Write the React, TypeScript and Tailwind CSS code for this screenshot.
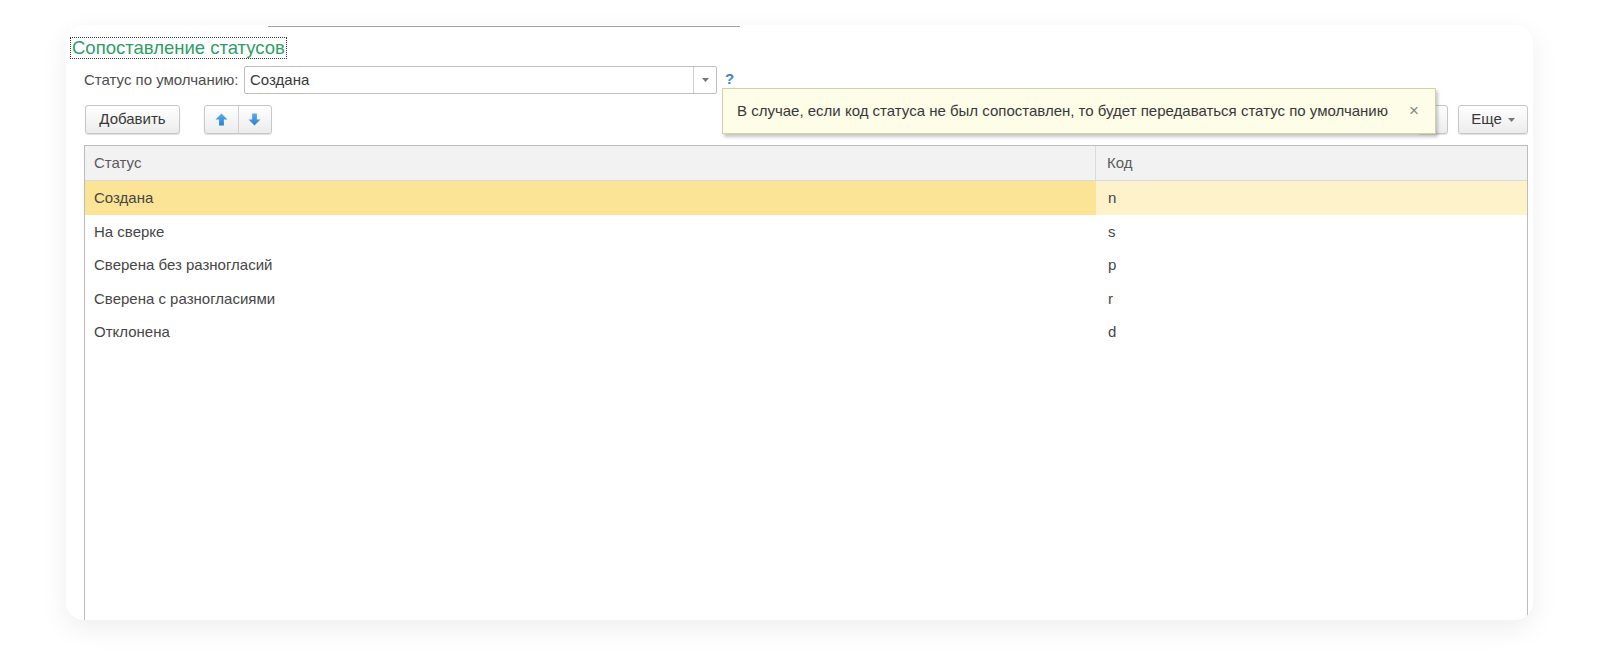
import React from "react";

const rows = [
  { status: "Создана", code: "n" },
  { status: "На сверке", code: "s" },
  { status: "Сверена без разногласий", code: "p" },
  { status: "Сверена с разногласиями", code: "r" },
  { status: "Отклонена", code: "d" },
];

function ArrowUp() {
  return (
    <svg width="13" height="13" viewBox="0 0 12 12">
      <defs>
        <linearGradient id="gu" x1="0" y1="0" x2="0" y2="1">
          <stop offset="0" stopColor="#5aaef0" />
          <stop offset="1" stopColor="#2b7fd0" />
        </linearGradient>
      </defs>
      <path d="M6 0.5 L11.5 6 H8.2 V11.5 H3.8 V6 H0.5 Z" fill="url(#gu)" />
    </svg>
  );
}

function ArrowDown() {
  return (
    <svg width="13" height="13" viewBox="0 0 12 12">
      <defs>
        <linearGradient id="gd" x1="0" y1="0" x2="0" y2="1">
          <stop offset="0" stopColor="#5aaef0" />
          <stop offset="1" stopColor="#2b7fd0" />
        </linearGradient>
      </defs>
      <path d="M6 11.5 L11.5 6 H8.2 V0.5 H3.8 V6 H0.5 Z" fill="url(#gd)" />
    </svg>
  );
}

function Caret({ color = "#555" }: { color?: string }) {
  return (
    <svg width="7" height="4" viewBox="0 0 7 4">
      <path d="M0 0 H7 L3.5 4 Z" fill={color} />
    </svg>
  );
}

const btn =
  "h-[29px] rounded-[3px] border border-[#c6c6c6] bg-gradient-to-b from-white to-[#ececec] shadow-[0_1px_1px_rgba(0,0,0,0.12)]";

export default function App() {
  return (
    <div
      className="w-[1600px] h-[660px] bg-white pt-[25px] pl-[66px] text-[#464646]"
      style={{ fontFamily: '"Liberation Sans", Arial, sans-serif' }}
    >
      <div className="relative w-[1467px] h-[595px] rounded-[18px] bg-white shadow-[0_8px_28px_rgba(0,0,0,0.07)] overflow-hidden flex flex-col">
        {/* strip left over from the tab bar above */}
        <div className="ml-[202px] w-[472px] h-px mt-px bg-[#a0a0a0]" />

        {/* group title with keyboard focus frame */}
        <div className="pl-[4px] pt-[10px]">
          <span className="inline-block border border-dotted border-[#333] px-[1px] leading-[20px] text-[18.5px] text-[#2f9d68]">
            Сопоставление статусов
          </span>
        </div>

        {/* default status field */}
        <div className="flex items-center pl-[18px] mt-[5px] h-[28px]">
          <span className="text-[15px] text-[#4d4d4d] w-[160px]">Статус по умолчанию:</span>
          <div className="flex h-[28px] w-[473px] border border-[#bdbdbd] rounded-[2px] bg-white">
            <div className="flex-1 pl-[5px] flex items-center text-[15px] text-[#383838]">Создана</div>
            <div className="w-[23px] border-l border-[#cfcfcf] flex items-center justify-center">
              <Caret color="#777" />
            </div>
          </div>
          <span className="ml-[8px] text-[15px] font-bold text-[#3a86c8] -mt-[2px]">?</span>
        </div>

        {/* command bar */}
        <div className="flex items-center pl-[19px] pr-[5px] mt-[11px] h-[29px]">
          <button className={`${btn} w-[95px] text-[15px] text-[#383838]`}>Добавить</button>
          <div className={`${btn} ml-[24px] w-[68px] flex`}>
            <div className="flex-1 flex items-center justify-center border-r border-[#d0d0d0]">
              <ArrowUp />
            </div>
            <div className="flex-1 flex items-center justify-center">
              <ArrowDown />
            </div>
          </div>
          <div className="flex-1" />
          <button className={`${btn} w-[30px] flex items-center justify-center`}>
            <span className="w-[2px] h-[12px] border-x border-dotted border-[#bbb]" />
          </button>
          <button className={`${btn} ml-[10px] w-[70px] flex items-center justify-center gap-[6px] text-[15px] text-[#383838]`}>
            Еще
            <Caret color="#777" />
          </button>
        </div>

        {/* mapping table */}
        <div className="ml-[18px] mr-[5px] mt-[11px] flex-1 border border-[#bcbcbc] border-b-0 flex flex-col text-[15px]">
          <div className="flex h-[35px] shrink-0 bg-[#f2f2f2] border-b border-[#dadada] text-[#5a5a5a]">
            <div className="w-[1011px] pl-[9px] flex items-center border-r border-[#dadada]">Статус</div>
            <div className="flex-1 pl-[11px] flex items-center">Код</div>
          </div>
          {rows.map((r, i) => (
            <div key={r.code} className="flex h-[33.5px] shrink-0">
              <div className={`w-[1011px] pl-[9px] pt-[1px] flex items-center ${i === 0 ? "bg-[#fbe495]" : ""}`}>
                {r.status}
              </div>
              <div className={`flex-1 pl-[12px] pt-[1px] flex items-center ${i === 0 ? "bg-[#fdf2c9]" : ""}`}>
                {r.code}
              </div>
            </div>
          ))}
        </div>

        {/* hint balloon */}
        <div className="absolute left-[656px] top-[63px] w-[714px] h-[46px] bg-[#fdfde8] border border-[#d2d0a8] shadow-[2px_3px_3px_rgba(0,0,0,0.22)] flex items-center pl-[14px] pr-[16px] text-[15px] text-[#383838]">
          <span className="flex-1 whitespace-nowrap">
            В случае, если код статуса не был сопоставлен, то будет передаваться статус по умолчанию
          </span>
          <span className="text-[17px] text-[#888]">×</span>
        </div>
      </div>
    </div>
  );
}
